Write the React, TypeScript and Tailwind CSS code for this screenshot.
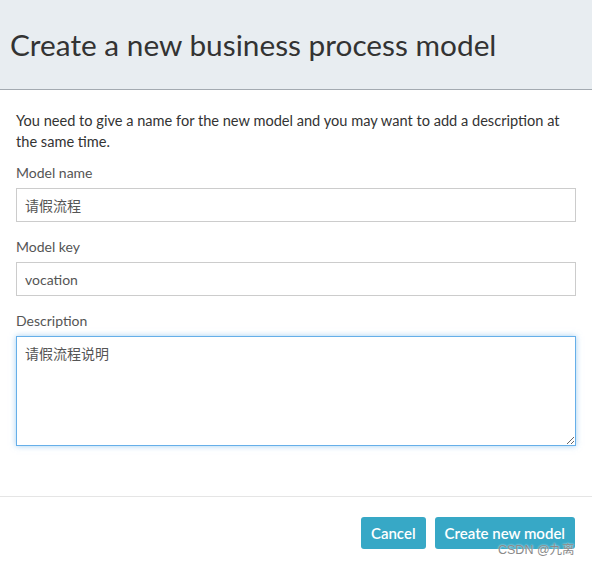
export default function App() {
  return (
    <div className="relative w-[592px] h-[565px] bg-white font-['Lato','Liberation_Sans','Noto_Sans_CJK_SC',sans-serif] text-[#333]">
      <div className="h-[90px] bg-[#e8edf1] border-b border-[#a3aab1] flex items-center pl-[10px]">
        <h1 className="text-[29.8px] font-normal text-[#333] leading-none pt-[1px]">Create a new business process model</h1>
      </div>

      <div className="px-4 pt-[20px]">
        <p className="text-[14.6px] leading-[21px] text-[#333]">
          You need to give a name for the new model and you may want to add a description at the same time.
        </p>

        <label className="block text-[14px] text-[#555] mt-[11px] leading-[20px]">Model name</label>
        <input
          type="text"
          defaultValue="请假流程"
          className="mt-[5px] w-full h-[34px] px-[8px] border border-[#ccc] text-[14px] text-[#555] outline-none"
        />

        <label className="block text-[14px] text-[#555] mt-[15px] leading-[20px]">Model key</label>
        <input
          type="text"
          defaultValue="vocation"
          className="mt-[5px] w-full h-[34px] px-[8px] border border-[#ccc] text-[14px] text-[#555] outline-none"
        />

        <label className="block text-[14px] text-[#555] mt-[15px] leading-[20px]">Description</label>
        <textarea
          defaultValue="请假流程说明"
          className="mt-[5px] block w-full h-[110px] px-[8px] py-[6px] border border-[#66afe9] shadow-[0_0_6px_rgba(102,175,233,0.6)] text-[14px] text-[#555] outline-none"
        />
      </div>

      <div className="mt-[50px] border-t border-[#e5e5e5] flex justify-end gap-[9px] pr-[17px] pt-[20px]">
        <button className="h-[32px] px-[10px] rounded-[3px] bg-[#37a8c6] text-white text-[15px] font-semibold">
          Cancel
        </button>
        <button className="h-[32px] px-[10px] rounded-[3px] bg-[#37a8c6] text-white text-[15px] font-semibold">
          Create new model
        </button>
      </div>

      <span className="absolute left-[498px] top-[542px] text-[12.5px] leading-[16px] text-[#8a8a8a] font-['Liberation_Sans','Noto_Sans_CJK_SC',sans-serif] [text-shadow:0_0_2px_#fff]">
        CSDN @九离
      </span>
    </div>
  )
}
